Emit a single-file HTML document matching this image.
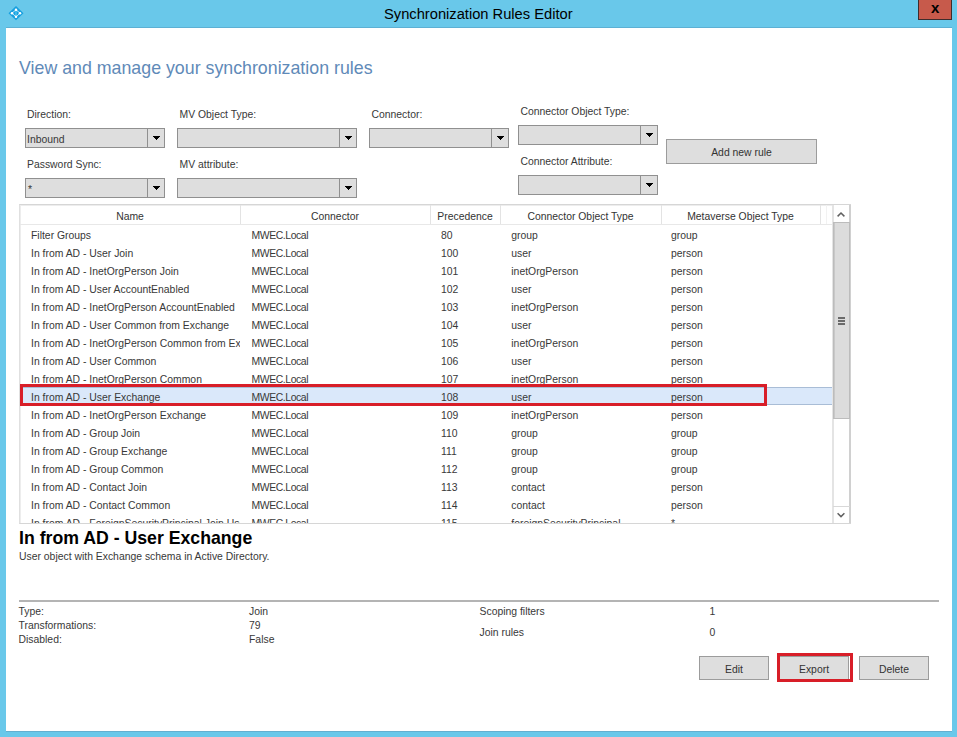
<!DOCTYPE html>
<html><head><meta charset="utf-8">
<style>
html,body{margin:0;padding:0;}
body{width:957px;height:737px;position:relative;overflow:hidden;background:#69c8ea;font-family:"Liberation Sans",sans-serif;}
.t{position:absolute;white-space:nowrap;}
.win{position:absolute;left:6px;top:28px;width:946px;height:703px;background:#fff;box-shadow:0 -1px 0 #5cb0d4,0 1px 0 #63afd0;}
.combo{position:absolute;box-sizing:border-box;background:#dedede;border:1px solid #909090;}
.combo .sep{position:absolute;top:0;bottom:0;width:1px;background:#909090;}
.combo .arr{position:absolute;fill:#000;}
.btn{position:absolute;box-sizing:border-box;background:#dedede;border:1px solid #9c9c9c;}
.grid{position:absolute;box-sizing:border-box;border:1px solid #d6d6d6;border-left-color:#e0e0e0;background:#fff;box-shadow:inset 1px 1px 0 #ededed;}
.hsep{position:absolute;width:1px;background:#e3e3e3;}
.hline{position:absolute;height:1px;background:#e8e8e8;}
.rows{position:absolute;overflow:hidden;}
.sel{position:absolute;box-sizing:border-box;background:#dae8fa;border-top:1px solid #a9bdd6;border-bottom:1px solid #a9bdd6;}
.red{position:absolute;box-sizing:border-box;border:3px solid #d81e28;}
.sb{position:absolute;box-sizing:border-box;background:#fff;border-left:2px solid #e4e4e4;border-right:2px solid #d0d0d0;}
.thumb{position:absolute;box-sizing:border-box;background:#dcdcdc;border:1px solid #bcbcbc;box-shadow:inset 1px 0 #c8c8c8;}
.sbtn{position:absolute;box-sizing:border-box;border-top:1px solid #d8d8d8;}
.grip{position:absolute;width:7px;height:8px;background:linear-gradient(#6a6a6a 0 2px,transparent 2px 3px,#6a6a6a 3px 5px,transparent 5px 6px,#6a6a6a 6px 8px);}
</style></head>
<body>
<div class="win"></div>
<svg style="position:absolute;left:8px;top:6px" width="16" height="15" viewBox="0 0 16 15">
<polygon points="8,0.1 15.5,7.2 8,14.2 0.5,7.2" fill="#169fdf"/>
<polygon points="8,3.7 12,7.2 8,10.8 4,7.2" fill="none" stroke="#e6f7ff" stroke-width="0.8"/>
<line x1="8" y1="5" x2="8" y2="9.4" stroke="#5fd3f7" stroke-width="1"/>
<circle cx="8" cy="3.7" r="1.25" fill="#fff"/><circle cx="8" cy="10.8" r="1.25" fill="#fff"/>
<circle cx="4" cy="7.2" r="1.25" fill="#fff"/><circle cx="12" cy="7.2" r="1.25" fill="#fff"/>
</svg>
<div class="t" style="left:384px;top:3.91px;font-size:14.7px;line-height:20px;color:#000">Synchronization Rules Editor</div>
<div style="position:absolute;left:918px;top:0;width:34px;height:20px;box-sizing:border-box;background:#c75a4b;border:1px solid #3e2c2c;border-top:none"></div>
<div class="t" style="left:931px;top:-2.2px;font-size:15px;line-height:20px;font-weight:bold;color:#000">x</div>
<div class="t" style="left:19px;top:58.23px;font-size:17.8px;line-height:20px;color:#5f8ab8">View and manage your synchronization rules</div>
<div class="t" style="left:27px;top:104.70px;font-size:10.4px;line-height:20px;color:#383838;font-weight:normal;">Direction:</div>
<div class="t" style="left:179.5px;top:104.70px;font-size:10.4px;line-height:20px;color:#383838;font-weight:normal;">MV Object Type:</div>
<div class="t" style="left:371.5px;top:104.70px;font-size:10.4px;line-height:20px;color:#383838;font-weight:normal;">Connector:</div>
<div class="t" style="left:520.5px;top:102.20px;font-size:10.4px;line-height:20px;color:#383838;font-weight:normal;">Connector Object Type:</div>
<div class="t" style="left:27px;top:154.90px;font-size:10.4px;line-height:20px;color:#383838;font-weight:normal;">Password Sync:</div>
<div class="t" style="left:179.5px;top:154.70px;font-size:10.4px;line-height:20px;color:#383838;font-weight:normal;">MV attribute:</div>
<div class="t" style="left:520.5px;top:152.20px;font-size:10.4px;line-height:20px;color:#383838;font-weight:normal;">Connector Attribute:</div>
<div class="combo" style="left:25px;top:128px;width:140px;height:20px"><div class="sep" style="left:121px"></div><svg class="arr" style="left:127px;top:7px" width="7" height="4"><rect x="0" y="0" width="7" height="1"/><rect x="1" y="1" width="5" height="1"/><rect x="2" y="2" width="3" height="1"/><rect x="3" y="3" width="1" height="1"/></svg></div>
<div class="t" style="left:27px;top:129.90px;font-size:10.4px;line-height:20px;color:#383838;font-weight:normal;">Inbound</div>
<div class="combo" style="left:177px;top:128px;width:180px;height:20px"><div class="sep" style="left:161px"></div><svg class="arr" style="left:167px;top:7px" width="7" height="4"><rect x="0" y="0" width="7" height="1"/><rect x="1" y="1" width="5" height="1"/><rect x="2" y="2" width="3" height="1"/><rect x="3" y="3" width="1" height="1"/></svg></div>
<div class="combo" style="left:369px;top:128px;width:140px;height:20px"><div class="sep" style="left:121px"></div><svg class="arr" style="left:127px;top:7px" width="7" height="4"><rect x="0" y="0" width="7" height="1"/><rect x="1" y="1" width="5" height="1"/><rect x="2" y="2" width="3" height="1"/><rect x="3" y="3" width="1" height="1"/></svg></div>
<div class="combo" style="left:518px;top:125px;width:140px;height:20px"><div class="sep" style="left:121px"></div><svg class="arr" style="left:127px;top:7px" width="7" height="4"><rect x="0" y="0" width="7" height="1"/><rect x="1" y="1" width="5" height="1"/><rect x="2" y="2" width="3" height="1"/><rect x="3" y="3" width="1" height="1"/></svg></div>
<div class="combo" style="left:25px;top:178px;width:140px;height:20px"><div class="sep" style="left:121px"></div><svg class="arr" style="left:127px;top:7px" width="7" height="4"><rect x="0" y="0" width="7" height="1"/><rect x="1" y="1" width="5" height="1"/><rect x="2" y="2" width="3" height="1"/><rect x="3" y="3" width="1" height="1"/></svg></div>
<div class="t" style="left:28px;top:179.36px;font-size:10.5px;line-height:20px;color:#383838;font-weight:normal;">*</div>
<div class="combo" style="left:177px;top:178px;width:180px;height:20px"><div class="sep" style="left:161px"></div><svg class="arr" style="left:167px;top:7px" width="7" height="4"><rect x="0" y="0" width="7" height="1"/><rect x="1" y="1" width="5" height="1"/><rect x="2" y="2" width="3" height="1"/><rect x="3" y="3" width="1" height="1"/></svg></div>
<div class="combo" style="left:518px;top:175px;width:140px;height:20px"><div class="sep" style="left:121px"></div><svg class="arr" style="left:127px;top:7px" width="7" height="4"><rect x="0" y="0" width="7" height="1"/><rect x="1" y="1" width="5" height="1"/><rect x="2" y="2" width="3" height="1"/><rect x="3" y="3" width="1" height="1"/></svg></div>
<div class="btn" style="left:666px;top:139px;width:151px;height:25px"></div>
<div class="t" style="left:641.50px;width:200px;text-align:center;top:142.60px;font-size:10.4px;line-height:20px;color:#333;font-weight:normal">Add new rule</div>
<div class="grid" style="left:19px;top:204px;width:832px;height:320px"></div>
<div class="t" style="left:30.00px;width:200px;text-align:center;top:206.70px;font-size:10.4px;line-height:20px;color:#333;font-weight:normal">Name</div>
<div class="t" style="left:235.00px;width:200px;text-align:center;top:206.70px;font-size:10.4px;line-height:20px;color:#333;font-weight:normal">Connector</div>
<div class="t" style="left:365.00px;width:200px;text-align:center;top:206.70px;font-size:10.4px;line-height:20px;color:#333;font-weight:normal">Precedence</div>
<div class="t" style="left:480.50px;width:200px;text-align:center;top:206.70px;font-size:10.4px;line-height:20px;color:#333;font-weight:normal">Connector Object Type</div>
<div class="t" style="left:640.50px;width:200px;text-align:center;top:206.70px;font-size:10.4px;line-height:20px;color:#333;font-weight:normal">Metaverse Object Type</div>
<div class="hsep" style="left:240px;top:205px;height:20px"></div>
<div class="hsep" style="left:430px;top:205px;height:20px"></div>
<div class="hsep" style="left:500px;top:205px;height:20px"></div>
<div class="hsep" style="left:661px;top:205px;height:20px"></div>
<div class="hsep" style="left:820px;top:205px;height:20px"></div>
<div class="hline" style="left:20px;top:224px;width:813px"></div>
<div class="hsep" style="left:826px;top:205px;height:19px;background:#f2f2f2"></div>
<div class="rows" style="left:20px;top:225px;width:813px;height:298px">
<div class="cell" style="left:0px;top:0;width:220px;height:298px;overflow:hidden;position:absolute"><div class="t" style="left:11px;top:0.90px;font-size:10.4px;line-height:20px;color:#383838;font-weight:normal;">Filter Groups</div>
</div>
<div class="t" style="left:231.5px;top:0.90px;font-size:10.4px;line-height:20px;color:#383838;font-weight:normal;letter-spacing:-0.4px">MWEC.Local</div>
<div class="t" style="left:421px;top:0.90px;font-size:10.4px;line-height:20px;color:#383838;font-weight:normal;">80</div>
<div class="t" style="left:491.3px;top:0.90px;font-size:10.4px;line-height:20px;color:#383838;font-weight:normal;">group</div>
<div class="t" style="left:651px;top:0.90px;font-size:10.4px;line-height:20px;color:#383838;font-weight:normal;">group</div>
<div class="cell" style="left:0px;top:0;width:220px;height:298px;overflow:hidden;position:absolute"><div class="t" style="left:11px;top:18.90px;font-size:10.4px;line-height:20px;color:#383838;font-weight:normal;">In from AD - User Join</div>
</div>
<div class="t" style="left:231.5px;top:18.90px;font-size:10.4px;line-height:20px;color:#383838;font-weight:normal;letter-spacing:-0.4px">MWEC.Local</div>
<div class="t" style="left:421px;top:18.90px;font-size:10.4px;line-height:20px;color:#383838;font-weight:normal;">100</div>
<div class="t" style="left:491.3px;top:18.90px;font-size:10.4px;line-height:20px;color:#383838;font-weight:normal;">user</div>
<div class="t" style="left:651px;top:18.90px;font-size:10.4px;line-height:20px;color:#383838;font-weight:normal;">person</div>
<div class="cell" style="left:0px;top:0;width:220px;height:298px;overflow:hidden;position:absolute"><div class="t" style="left:11px;top:36.90px;font-size:10.4px;line-height:20px;color:#383838;font-weight:normal;">In from AD - InetOrgPerson Join</div>
</div>
<div class="t" style="left:231.5px;top:36.90px;font-size:10.4px;line-height:20px;color:#383838;font-weight:normal;letter-spacing:-0.4px">MWEC.Local</div>
<div class="t" style="left:421px;top:36.90px;font-size:10.4px;line-height:20px;color:#383838;font-weight:normal;">101</div>
<div class="t" style="left:491.3px;top:36.90px;font-size:10.4px;line-height:20px;color:#383838;font-weight:normal;">inetOrgPerson</div>
<div class="t" style="left:651px;top:36.90px;font-size:10.4px;line-height:20px;color:#383838;font-weight:normal;">person</div>
<div class="cell" style="left:0px;top:0;width:220px;height:298px;overflow:hidden;position:absolute"><div class="t" style="left:11px;top:54.90px;font-size:10.4px;line-height:20px;color:#383838;font-weight:normal;">In from AD - User AccountEnabled</div>
</div>
<div class="t" style="left:231.5px;top:54.90px;font-size:10.4px;line-height:20px;color:#383838;font-weight:normal;letter-spacing:-0.4px">MWEC.Local</div>
<div class="t" style="left:421px;top:54.90px;font-size:10.4px;line-height:20px;color:#383838;font-weight:normal;">102</div>
<div class="t" style="left:491.3px;top:54.90px;font-size:10.4px;line-height:20px;color:#383838;font-weight:normal;">user</div>
<div class="t" style="left:651px;top:54.90px;font-size:10.4px;line-height:20px;color:#383838;font-weight:normal;">person</div>
<div class="cell" style="left:0px;top:0;width:220px;height:298px;overflow:hidden;position:absolute"><div class="t" style="left:11px;top:72.90px;font-size:10.4px;line-height:20px;color:#383838;font-weight:normal;">In from AD - InetOrgPerson AccountEnabled</div>
</div>
<div class="t" style="left:231.5px;top:72.90px;font-size:10.4px;line-height:20px;color:#383838;font-weight:normal;letter-spacing:-0.4px">MWEC.Local</div>
<div class="t" style="left:421px;top:72.90px;font-size:10.4px;line-height:20px;color:#383838;font-weight:normal;">103</div>
<div class="t" style="left:491.3px;top:72.90px;font-size:10.4px;line-height:20px;color:#383838;font-weight:normal;">inetOrgPerson</div>
<div class="t" style="left:651px;top:72.90px;font-size:10.4px;line-height:20px;color:#383838;font-weight:normal;">person</div>
<div class="cell" style="left:0px;top:0;width:220px;height:298px;overflow:hidden;position:absolute"><div class="t" style="left:11px;top:90.90px;font-size:10.4px;line-height:20px;color:#383838;font-weight:normal;">In from AD - User Common from Exchange</div>
</div>
<div class="t" style="left:231.5px;top:90.90px;font-size:10.4px;line-height:20px;color:#383838;font-weight:normal;letter-spacing:-0.4px">MWEC.Local</div>
<div class="t" style="left:421px;top:90.90px;font-size:10.4px;line-height:20px;color:#383838;font-weight:normal;">104</div>
<div class="t" style="left:491.3px;top:90.90px;font-size:10.4px;line-height:20px;color:#383838;font-weight:normal;">user</div>
<div class="t" style="left:651px;top:90.90px;font-size:10.4px;line-height:20px;color:#383838;font-weight:normal;">person</div>
<div class="cell" style="left:0px;top:0;width:220px;height:298px;overflow:hidden;position:absolute"><div class="t" style="left:11px;top:108.90px;font-size:10.4px;line-height:20px;color:#383838;font-weight:normal;">In from AD - InetOrgPerson Common from Exchange</div>
</div>
<div class="t" style="left:231.5px;top:108.90px;font-size:10.4px;line-height:20px;color:#383838;font-weight:normal;letter-spacing:-0.4px">MWEC.Local</div>
<div class="t" style="left:421px;top:108.90px;font-size:10.4px;line-height:20px;color:#383838;font-weight:normal;">105</div>
<div class="t" style="left:491.3px;top:108.90px;font-size:10.4px;line-height:20px;color:#383838;font-weight:normal;">inetOrgPerson</div>
<div class="t" style="left:651px;top:108.90px;font-size:10.4px;line-height:20px;color:#383838;font-weight:normal;">person</div>
<div class="cell" style="left:0px;top:0;width:220px;height:298px;overflow:hidden;position:absolute"><div class="t" style="left:11px;top:126.90px;font-size:10.4px;line-height:20px;color:#383838;font-weight:normal;">In from AD - User Common</div>
</div>
<div class="t" style="left:231.5px;top:126.90px;font-size:10.4px;line-height:20px;color:#383838;font-weight:normal;letter-spacing:-0.4px">MWEC.Local</div>
<div class="t" style="left:421px;top:126.90px;font-size:10.4px;line-height:20px;color:#383838;font-weight:normal;">106</div>
<div class="t" style="left:491.3px;top:126.90px;font-size:10.4px;line-height:20px;color:#383838;font-weight:normal;">user</div>
<div class="t" style="left:651px;top:126.90px;font-size:10.4px;line-height:20px;color:#383838;font-weight:normal;">person</div>
<div class="cell" style="left:0px;top:0;width:220px;height:298px;overflow:hidden;position:absolute"><div class="t" style="left:11px;top:144.90px;font-size:10.4px;line-height:20px;color:#383838;font-weight:normal;">In from AD - InetOrgPerson Common</div>
</div>
<div class="t" style="left:231.5px;top:144.90px;font-size:10.4px;line-height:20px;color:#383838;font-weight:normal;letter-spacing:-0.4px">MWEC.Local</div>
<div class="t" style="left:421px;top:144.90px;font-size:10.4px;line-height:20px;color:#383838;font-weight:normal;">107</div>
<div class="t" style="left:491.3px;top:144.90px;font-size:10.4px;line-height:20px;color:#383838;font-weight:normal;">inetOrgPerson</div>
<div class="t" style="left:651px;top:144.90px;font-size:10.4px;line-height:20px;color:#383838;font-weight:normal;">person</div>
<div class="sel" style="left:0;top:162px;width:812px;height:18px"></div>
<div class="cell" style="left:0px;top:0;width:220px;height:298px;overflow:hidden;position:absolute"><div class="t" style="left:11px;top:162.90px;font-size:10.4px;line-height:20px;color:#383838;font-weight:normal;">In from AD - User Exchange</div>
</div>
<div class="t" style="left:231.5px;top:162.90px;font-size:10.4px;line-height:20px;color:#383838;font-weight:normal;letter-spacing:-0.4px">MWEC.Local</div>
<div class="t" style="left:421px;top:162.90px;font-size:10.4px;line-height:20px;color:#383838;font-weight:normal;">108</div>
<div class="t" style="left:491.3px;top:162.90px;font-size:10.4px;line-height:20px;color:#383838;font-weight:normal;">user</div>
<div class="t" style="left:651px;top:162.90px;font-size:10.4px;line-height:20px;color:#383838;font-weight:normal;">person</div>
<div class="cell" style="left:0px;top:0;width:220px;height:298px;overflow:hidden;position:absolute"><div class="t" style="left:11px;top:180.90px;font-size:10.4px;line-height:20px;color:#383838;font-weight:normal;">In from AD - InetOrgPerson Exchange</div>
</div>
<div class="t" style="left:231.5px;top:180.90px;font-size:10.4px;line-height:20px;color:#383838;font-weight:normal;letter-spacing:-0.4px">MWEC.Local</div>
<div class="t" style="left:421px;top:180.90px;font-size:10.4px;line-height:20px;color:#383838;font-weight:normal;">109</div>
<div class="t" style="left:491.3px;top:180.90px;font-size:10.4px;line-height:20px;color:#383838;font-weight:normal;">inetOrgPerson</div>
<div class="t" style="left:651px;top:180.90px;font-size:10.4px;line-height:20px;color:#383838;font-weight:normal;">person</div>
<div class="cell" style="left:0px;top:0;width:220px;height:298px;overflow:hidden;position:absolute"><div class="t" style="left:11px;top:198.90px;font-size:10.4px;line-height:20px;color:#383838;font-weight:normal;">In from AD - Group Join</div>
</div>
<div class="t" style="left:231.5px;top:198.90px;font-size:10.4px;line-height:20px;color:#383838;font-weight:normal;letter-spacing:-0.4px">MWEC.Local</div>
<div class="t" style="left:421px;top:198.90px;font-size:10.4px;line-height:20px;color:#383838;font-weight:normal;">110</div>
<div class="t" style="left:491.3px;top:198.90px;font-size:10.4px;line-height:20px;color:#383838;font-weight:normal;">group</div>
<div class="t" style="left:651px;top:198.90px;font-size:10.4px;line-height:20px;color:#383838;font-weight:normal;">group</div>
<div class="cell" style="left:0px;top:0;width:220px;height:298px;overflow:hidden;position:absolute"><div class="t" style="left:11px;top:216.90px;font-size:10.4px;line-height:20px;color:#383838;font-weight:normal;">In from AD - Group Exchange</div>
</div>
<div class="t" style="left:231.5px;top:216.90px;font-size:10.4px;line-height:20px;color:#383838;font-weight:normal;letter-spacing:-0.4px">MWEC.Local</div>
<div class="t" style="left:421px;top:216.90px;font-size:10.4px;line-height:20px;color:#383838;font-weight:normal;">111</div>
<div class="t" style="left:491.3px;top:216.90px;font-size:10.4px;line-height:20px;color:#383838;font-weight:normal;">group</div>
<div class="t" style="left:651px;top:216.90px;font-size:10.4px;line-height:20px;color:#383838;font-weight:normal;">group</div>
<div class="cell" style="left:0px;top:0;width:220px;height:298px;overflow:hidden;position:absolute"><div class="t" style="left:11px;top:234.90px;font-size:10.4px;line-height:20px;color:#383838;font-weight:normal;">In from AD - Group Common</div>
</div>
<div class="t" style="left:231.5px;top:234.90px;font-size:10.4px;line-height:20px;color:#383838;font-weight:normal;letter-spacing:-0.4px">MWEC.Local</div>
<div class="t" style="left:421px;top:234.90px;font-size:10.4px;line-height:20px;color:#383838;font-weight:normal;">112</div>
<div class="t" style="left:491.3px;top:234.90px;font-size:10.4px;line-height:20px;color:#383838;font-weight:normal;">group</div>
<div class="t" style="left:651px;top:234.90px;font-size:10.4px;line-height:20px;color:#383838;font-weight:normal;">group</div>
<div class="cell" style="left:0px;top:0;width:220px;height:298px;overflow:hidden;position:absolute"><div class="t" style="left:11px;top:252.90px;font-size:10.4px;line-height:20px;color:#383838;font-weight:normal;">In from AD - Contact Join</div>
</div>
<div class="t" style="left:231.5px;top:252.90px;font-size:10.4px;line-height:20px;color:#383838;font-weight:normal;letter-spacing:-0.4px">MWEC.Local</div>
<div class="t" style="left:421px;top:252.90px;font-size:10.4px;line-height:20px;color:#383838;font-weight:normal;">113</div>
<div class="t" style="left:491.3px;top:252.90px;font-size:10.4px;line-height:20px;color:#383838;font-weight:normal;">contact</div>
<div class="t" style="left:651px;top:252.90px;font-size:10.4px;line-height:20px;color:#383838;font-weight:normal;">person</div>
<div class="cell" style="left:0px;top:0;width:220px;height:298px;overflow:hidden;position:absolute"><div class="t" style="left:11px;top:270.90px;font-size:10.4px;line-height:20px;color:#383838;font-weight:normal;">In from AD - Contact Common</div>
</div>
<div class="t" style="left:231.5px;top:270.90px;font-size:10.4px;line-height:20px;color:#383838;font-weight:normal;letter-spacing:-0.4px">MWEC.Local</div>
<div class="t" style="left:421px;top:270.90px;font-size:10.4px;line-height:20px;color:#383838;font-weight:normal;">114</div>
<div class="t" style="left:491.3px;top:270.90px;font-size:10.4px;line-height:20px;color:#383838;font-weight:normal;">contact</div>
<div class="t" style="left:651px;top:270.90px;font-size:10.4px;line-height:20px;color:#383838;font-weight:normal;">person</div>
<div class="cell" style="left:0px;top:0;width:220px;height:298px;overflow:hidden;position:absolute"><div class="t" style="left:11px;top:288.90px;font-size:10.4px;line-height:20px;color:#383838;font-weight:normal;">In from AD - ForeignSecurityPrincipal Join User</div>
</div>
<div class="t" style="left:231.5px;top:288.90px;font-size:10.4px;line-height:20px;color:#383838;font-weight:normal;letter-spacing:-0.4px">MWEC.Local</div>
<div class="t" style="left:421px;top:288.90px;font-size:10.4px;line-height:20px;color:#383838;font-weight:normal;">115</div>
<div class="t" style="left:491.3px;top:288.90px;font-size:10.4px;line-height:20px;color:#383838;font-weight:normal;">foreignSecurityPrincipal</div>
<div class="t" style="left:651px;top:288.90px;font-size:10.4px;line-height:20px;color:#383838;font-weight:normal;">*</div>
</div>
<div class="red" style="left:20px;top:384px;width:747px;height:22px"></div>
<div class="sb" style="left:832px;top:205px;width:19px;height:318px"></div>
<div class="thumb" style="left:833px;top:222px;width:17px;height:197px"></div>
<div class="grip" style="left:838px;top:317px"></div>
<div class="sbtn" style="left:833px;top:506px;width:17px;height:17px"></div>
<svg style="position:absolute;left:833px;top:205px" width="17" height="17"><polyline points="4.6,11.4 8,8 11.4,11.4" fill="none" stroke="#606060" stroke-width="1.5"/></svg>
<svg style="position:absolute;left:833px;top:506px" width="17" height="17"><polyline points="4.6,7.2 8,10.6 11.4,7.2" fill="none" stroke="#606060" stroke-width="1.5"/></svg>
<div class="t" style="left:19px;top:527.97px;font-size:17.7px;line-height:20px;color:#000;font-weight:bold;">In from AD - User Exchange</div>
<div class="t" style="left:19px;top:546.80px;font-size:10.4px;line-height:20px;color:#383838;font-weight:normal;">User object with Exchange schema in Active Directory.</div>
<div style="position:absolute;left:19px;top:600px;width:920px;height:2px;background:#b4b4b4"></div>
<div class="t" style="left:18.5px;top:602.20px;font-size:10.4px;line-height:20px;color:#383838;font-weight:normal;">Type:</div>
<div class="t" style="left:18.5px;top:616.20px;font-size:10.4px;line-height:20px;color:#383838;font-weight:normal;">Transformations:</div>
<div class="t" style="left:18.5px;top:630.20px;font-size:10.4px;line-height:20px;color:#383838;font-weight:normal;">Disabled:</div>
<div class="t" style="left:249px;top:602.20px;font-size:10.4px;line-height:20px;color:#383838;font-weight:normal;">Join</div>
<div class="t" style="left:249px;top:616.20px;font-size:10.4px;line-height:20px;color:#383838;font-weight:normal;">79</div>
<div class="t" style="left:249px;top:630.20px;font-size:10.4px;line-height:20px;color:#383838;font-weight:normal;">False</div>
<div class="t" style="left:479.5px;top:602.20px;font-size:10.4px;line-height:20px;color:#383838;font-weight:normal;">Scoping filters</div>
<div class="t" style="left:479.5px;top:622.70px;font-size:10.4px;line-height:20px;color:#383838;font-weight:normal;">Join rules</div>
<div class="t" style="left:709.5px;top:602.20px;font-size:10.4px;line-height:20px;color:#383838;font-weight:normal;">1</div>
<div class="t" style="left:709.5px;top:622.70px;font-size:10.4px;line-height:20px;color:#383838;font-weight:normal;">0</div>
<div class="btn" style="left:699px;top:656px;width:70px;height:24px"></div>
<div class="t" style="left:634.00px;width:200px;text-align:center;top:659.60px;font-size:10.4px;line-height:20px;color:#333;font-weight:normal">Edit</div>
<div class="btn" style="left:779px;top:656px;width:70px;height:24px"></div>
<div class="t" style="left:714.00px;width:200px;text-align:center;top:659.60px;font-size:10.4px;line-height:20px;color:#333;font-weight:normal">Export</div>
<div class="btn" style="left:859px;top:656px;width:70px;height:24px"></div>
<div class="t" style="left:794.00px;width:200px;text-align:center;top:659.60px;font-size:10.4px;line-height:20px;color:#333;font-weight:normal">Delete</div>
<div class="red" style="left:777px;top:653px;width:76px;height:29px"></div>

</body></html>
